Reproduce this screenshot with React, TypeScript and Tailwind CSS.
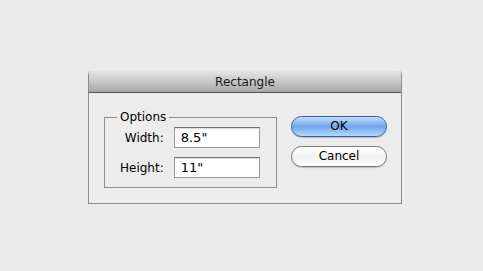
export default function App() {
  return (
    <div
      className="w-[483px] h-[271px] bg-[#ebebeb] pt-[71px] pl-[88px]"
      style={{ fontFamily: '"DejaVu Sans", sans-serif' }}
    >
      <div className="w-[314px] h-[133px] border border-[#8c8c8c] border-t-0 rounded-t-[4px] bg-[#ececec] flex flex-col">
        <div className="h-[22px] rounded-t-[4px] bg-gradient-to-b from-[#e6e6e6] to-[#a8a8a8] border-b border-[#525252] flex items-center justify-center">
          <span className="text-[12px] text-[#1a1a1a]">Rectangle</span>
        </div>
        <div className="flex pl-[15px] pt-[23px]">
          <fieldset className="w-[173px] h-[79px] border border-[#8e8e8e] pl-[12px] -mt-[7px]">
            <legend className="px-[3px] text-[12px] text-black leading-[16px]">Options</legend>
            <div className="grid grid-cols-[max-content_86px] gap-x-[10px] gap-y-[9px] items-center pl-[3px] pt-[2px]">
              <span className="text-[12px] text-black text-right">Width:</span>
              <div className="h-[21px] border border-[#9a9a9a] border-t-[#6f6f6f] bg-white shadow-[inset_0_1px_1px_rgba(0,0,0,0.15)] text-[13px] px-[6px] leading-[19px]">8.5"</div>
              <span className="text-[12px] text-black text-right">Height:</span>
              <div className="h-[21px] border border-[#9a9a9a] border-t-[#6f6f6f] bg-white shadow-[inset_0_1px_1px_rgba(0,0,0,0.15)] text-[13px] px-[6px] leading-[19px]">11"</div>
            </div>
          </fieldset>
          <div className="flex flex-col gap-[9px] ml-[14px]">
            <button className="w-[96px] h-[21px] rounded-full border border-[#3d5f99] bg-gradient-to-b from-[#c4dcf8] via-[#6fa6ea] to-[#b3dafa] text-[12px] text-black leading-[19px] shadow-[0_1px_1px_rgba(0,0,0,0.2)]">OK</button>
            <button className="w-[96px] h-[21px] rounded-full border border-[#7a7a7a] bg-gradient-to-b from-white via-[#f2f2f2] to-[#fdfdfd] text-[12px] text-black leading-[19px] shadow-[0_1px_1px_rgba(0,0,0,0.2)]">Cancel</button>
          </div>
        </div>
      </div>
    </div>
  );
}
